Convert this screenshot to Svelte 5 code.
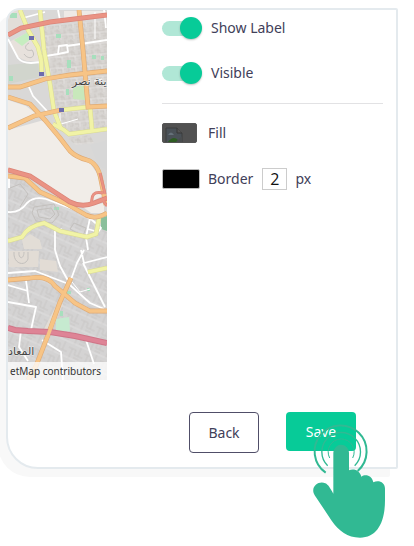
<script lang="ts">
	let showLabel = $state(true);
	let visible = $state(true);
	let borderWidth = $state('2');
</script>

<main class="page">
	<section class="panel">
		<div class="map">
			<svg class="tiles" viewBox="8 10 99 370" role="img" aria-label="Street map">
				<defs>
					<pattern id="blocks" width="13" height="11" patternUnits="userSpaceOnUse" patternTransform="rotate(-4)">
						<rect width="13" height="11" fill="#d8d5d2" />
						<path d="M0 2h5v3h5v-4M1 8h4v3M7 7h5v3h-3M3 0v6M11 3v4" fill="none" stroke="#c5c1bd" stroke-width="0.7" />
						<path d="M0 6h13M6 6v5" fill="none" stroke="#e7e5e3" stroke-width="0.8" />
					</pattern>
					<pattern id="lanes" width="17" height="15" patternUnits="userSpaceOnUse" patternTransform="rotate(24)">
						<rect width="17" height="15" fill="#d4d3d3" />
						<path d="M0 4h8v5h9M4 4v11M12 0v9M8 12h6" fill="none" stroke="#c6c4c3" stroke-width="0.8" />
						<path d="M0 14h17" stroke="#e2e1e1" stroke-width="0.8" />
					</pattern>
				</defs>

				<rect x="8" y="10" width="99" height="370" fill="#d9d8d7" />
				<path d="M42 27L107 20V130L65 132L50 85Z" fill="url(#blocks)" />
				<path d="M8 178L25 180L40 194L97 220L107 232V380H8Z" fill="url(#lanes)" />
				<path d="M61 115L87 110L90 128L68 132ZM67 138L90 135L94 143L76 145Z" fill="url(#blocks)" />

				<!-- land use -->
				<path d="M8 10H20L25 26L8 34Z" fill="#e2ded9" />
				<path d="M64 11H106V16L64 20Z" fill="#eeeae6" />
				<path d="M9 42L29 32L38 48L41 61H27L18 57Z" fill="#e7e1dc" />
				<path d="M14 40L28 32L31 39L22 46Z" fill="#c6edc0" />
				<path d="M8 65L38 62L40 77L8 84Z" fill="#d1d5cd" />
				<path d="M8 100L26 106L38 115L8 126ZM8 130L44 120L68 150L90 163L98 175L104 195L85 205L68 199L50 187L30 176L8 170Z" fill="#f1ede8" />
				<path d="M83 207L104 203V213H91Z" fill="#f1ede8" />
				<path d="M90 145L107 140V170L98 165Z" fill="#d7d7d7" />
				<path d="M101 218L107 216V231L101 229Z" fill="#8abf9b" />
				<path d="M73 87L84 85L85 100L73 99Z" fill="#c8e8bb" />
				<path d="M56 319L69 317L70 331L56 331Z" fill="#c6ead0" />
				<path d="M9 251L39 251L38 267L9 267ZM40 259L56 261L58 272L40 270Z" fill="#e2dcd5" />
				<path d="M43 331L58 302L63 304L50 335Z" fill="#e2ddd6" />
				<path d="M22 240L30 234L40 240L42 249H24Z" fill="#e2ddd6" />
				<g fill="#a7dfbd">
					<path d="M10 13h7v5h-7zM9 76h4v5h-4zM56 34h5v4h-5zM67 60h4v8h-4zM66 89h3v6h-3zM92 55h4v4h-4z" />
					<path d="M54 207h5v3h-5zM67 291h4v3h-4zM87 288h3v3h-3zM60 311h3v5h-3zM101 56h3v4h-3z" />
				</g>
				<g fill="none" stroke="#c3c0bd" stroke-width="1">
					<path d="M34 207L54 204L59 215L52 223L36 221L32 213ZM37 210L51 208L55 214L50 219L39 217Z" />
					<path d="M14 252C13 264 25 267 28 259V252M19 252C18 259 24 260 24 252" />
					<path d="M29 43C22 47 27 52 32 50C37 57 29 61 24 54" />
					<path d="M10 188L20 184L28 194L20 207M74 223L86 228L83 236L70 229Z" />
				</g>

				<!-- minor streets -->
				<g fill="none" stroke="#fff" stroke-width="1.8" stroke-linejoin="round">
					<path d="M8 39L18 58Q22 63 31 63L41 62M40 57L58 54L59 46L67 45L68 52L58 54M67 46L107 40" />
					<path d="M23 18L45 12M58 10L60 20M104 10L106 28M29 87L33 96L47 111M38 46L42 57" />
					<path d="M8 212Q20 213 27 203Q34 196 46 199L75 210L92 220L101 228L98 232L88 229M9 176V188M90 218L86 237L88 250M55 250V231L62 229" />
					<path d="M8 273L35 271L66 283M55 250L60 266L71 286L90 303L104 309M84 250L77 263L69 285M81 250L84 263L107 257M83 263L105 307" />
					<path d="M8 302L36 307L31 330M26 280L29 303M21 330L19 347L28 361M42 340L61 352L63 380M85 337L94 364M8 285L28 291" />
					<path d="M72 282L80 292L90 289M61 124L78 119M60 127V113M95 12V39M94 81L102 79" stroke-width="1" />
				</g>

				<!-- yellow roads -->
				<g fill="none" stroke="#d9da91" stroke-width="4.6">
					<path d="M20 10L28 30L38 47L41 59L42 75M40 10L44 50L50 84L54 111L61 129" />
					<path d="M61 110L88 107M90 107L92 130M53 124L64 130L69 134L107 129" />
					<path d="M8 241L22 237Q28 226 44 223L60 231L87 237L96 234L99 218M88 272L107 268" />
				</g>
				<g fill="none" stroke="#f1f3a6" stroke-width="3.6">
					<path d="M20 10L28 30L38 47L41 59L42 75M40 10L44 50L50 84L54 111L61 129" />
					<path d="M61 110L88 107M90 107L92 130M53 124L64 130L69 134L107 129" />
					<path d="M8 241L22 237Q28 226 44 223L60 231L87 237L96 234L99 218M88 272L107 268" />
				</g>

				<!-- orange roads -->
				<g fill="none" stroke="#dfaa74" stroke-width="4.8">
					<path d="M79 10L83 50L88 107L107 106M8 87H20L45 79L70 75L107 71" />
					<path d="M8 97L30 104L45 120L60 138L70 151Q76 157 87 160T101 180L106 205M8 128L34 116L61 110" />
					<path d="M8 176L25 178L40 192L65 203L86 215Q96 220 107 213M8 280L30 278Q48 275 55 286L75 303L90 311H107" />
					<path d="M71 278L60 302L48 335L36 366L28 380" />
				</g>
				<g fill="none" stroke="#f7c486" stroke-width="3.6">
					<path d="M79 10L83 50L88 107L107 106M8 87H20L45 79L70 75L107 71" />
					<path d="M8 97L30 104L45 120L60 138L70 151Q76 157 87 160T101 180L106 205M8 128L34 116L61 110" />
					<path d="M8 176L25 178L40 192L65 203L86 215Q96 220 107 213M8 280L30 278Q48 275 55 286L75 303L90 311H107" />
					<path d="M71 278L60 302L48 335L36 366L28 380" />
				</g>

				<!-- motorways -->
				<g fill="none" stroke="#db8478" stroke-width="5">
					<path d="M8 35L21 28L50 22L107 15M8 170L30 176L50 189L70 202Q82 208 94 203L107 198" />
					<path d="M100 173L105 194M92 204Q90 190 103 193M102 199L107 206" stroke-width="3" />
				</g>
				<g fill="none" stroke="#ea9384" stroke-width="3.4">
					<path d="M8 35L21 28L50 22L107 15M8 170L30 176L50 189L70 202Q82 208 94 203L107 198" />
					<path d="M100 173L105 194M92 204Q90 190 103 193M102 199L107 206" stroke-width="1.8" />
				</g>
				<path d="M8 328L15 330L28 331L50 332L75 336L107 343" fill="none" stroke="#cf7587" stroke-width="6" />
				<path d="M8 328L15 330L28 331L50 332L75 336L107 343" fill="none" stroke="#de8496" stroke-width="4" />
				<path d="M55 316L46 341" stroke="#f7c486" stroke-width="3.6" />

				<g fill="#6d6cae">
					<rect x="29" y="36" width="5" height="4" />
					<rect x="39" y="72" width="5" height="4" />
					<rect x="59" y="108" width="5" height="4" />
				</g>
				<text class="place" x="72" y="85" direction="ltr">ينة نصر</text>
				<text class="place" x="8" y="355" direction="ltr">المعاد</text>
			</svg>
			<div class="attribution">etMap contributors</div>
		</div>

		<form class="settings" onsubmit={(e) => e.preventDefault()}>
			<div class="toggles">
				<label class="toggle">
					<input type="checkbox" bind:checked={showLabel} />
					Show Label
				</label>
				<label class="toggle">
					<input type="checkbox" bind:checked={visible} />
					Visible
				</label>
			</div>

			<div class="row">
				<button type="button" class="swatch fill" aria-labelledby="fill-label">
					<svg width="34" height="19" viewBox="0 0 34 19" aria-hidden="true">
						<path d="M3 19V4H14L19 9V19Z" fill="#4a5157" stroke="#3c3e3f" />
						<path d="M14 4V9H19" fill="#555" stroke="#363636" />
						<path d="M5 11Q8 6 11 11Z" fill="#66717a" />
						<path d="M4 19Q10 11 15 16L13 19Z" fill="#2d5b22" />
						<path d="M12 19L19 12V19Z" fill="#494c4e" />
					</svg>
				</button>
				<span id="fill-label">Fill</span>
			</div>
			<div class="row">
				<button type="button" class="swatch border" aria-labelledby="border-label"></button>
				<label id="border-label" for="border-width">Border</label>
				<input id="border-width" class="width-input" type="text" inputmode="numeric" bind:value={borderWidth} />
				<span class="unit">px</span>
			</div>

			<div class="actions">
				<button type="button" class="btn back">Back</button>
				<div class="save-wrap">
					<button type="submit" class="btn save">Save</button>
					<svg class="tap" width="80" height="117" viewBox="120 70 240 351" aria-hidden="true">
						<g fill="none" stroke="#31b993">
							<path d="M167 222A78 78 0 1 1 263 217" stroke-width="6" />
							<path d="M173 201A58 58 0 1 1 254 201" stroke-width="4" />
							<path d="M179 178A39 39 0 1 1 248 178" stroke-width="3" />
						</g>
						<path
							d="M190 285V162A23.500 23.500 0 0 1 237 162V215C252 208 270 216 274 234C287 224 306 231 310 251C326 243 345 251 345 270V305C345 370 322 417 270 417C232 416 207 397 185 366L135 291C118 267 145 244 166 254C175 258 180 268 190 285Z"
							fill="#31b993"
						/>
					</svg>
				</div>
			</div>
		</form>
	</section>
</main>

<style>
	:global(body) {
		margin: 0;
		background: #fff;
	}

	.page {
		padding: 8px 16px 72px 6px;
		overflow: hidden;
		font-family: 'Noto Sans', 'Open Sans', sans-serif;
		font-size: 14px;
		line-height: 20px;
		color: #414059;
	}

	.panel {
		display: grid;
		grid-template-columns: 99px 1fr;
		border: 2px solid #e4eaee;
		border-radius: 14px 2px 2px 32px;
		background: #fff;
		box-shadow: -8px 8px 0 #f8f8f8;
	}

	.map {
		position: relative;
		align-self: start;
		overflow: hidden;
		border-top-left-radius: 12px;
	}

	.tiles {
		display: block;
		width: 100%;
	}

	.place {
		font-family: 'DejaVu Sans', sans-serif;
		font-size: 11px;
		fill: #444;
		stroke: #eee;
		stroke-width: 1px;
		paint-order: stroke;
	}

	.attribution {
		position: absolute;
		inset: auto 0 0 0;
		padding-right: 6px;
		background: rgba(255, 255, 255, 0.75);
		color: #333;
		font-size: 10px;
		line-height: 18px;
		text-align: right;
		white-space: nowrap;
	}

	.settings {
		display: flex;
		flex-direction: column;
		padding: 6px 13px 14px 55px;
	}

	.toggles {
		display: flex;
		flex-direction: column;
		gap: 21px;
		padding-bottom: 18px;
		margin-bottom: 17px;
		border-bottom: 1px solid #e2e2e4;
	}

	.toggle {
		display: flex;
		align-items: center;
		gap: 9px;
		height: 24px;
	}

	.toggle input {
		appearance: none;
		display: flex;
		align-items: center;
		width: 34px;
		height: 15px;
		margin: 0 6px 0 0;
		border-radius: 8px;
		background: #d5d5d5;
	}

	.toggle input::before {
		content: '';
		width: 22px;
		height: 22px;
		flex: none;
		border-radius: 50%;
		background: #fff;
		box-shadow: 0 1px 2px rgba(0, 0, 0, 0.25);
	}

	.toggle input:checked {
		background: #b0e7d6;
	}

	.toggle input:checked::before {
		margin-left: 18px;
		background: #07cb98;
	}

	.row {
		display: flex;
		align-items: center;
		height: 24px;
		margin-bottom: 22px;
	}

	.swatch {
		flex: none;
		height: 20px;
		padding: 0;
		border: 1px solid #555;
		border-radius: 2px;
		overflow: hidden;
	}

	.swatch svg {
		display: block;
	}

	.fill {
		width: 35px;
		margin-right: 11px;
		background: #515151;
	}

	.border {
		width: 38px;
		margin-right: 8px;
		border-color: #bbb;
		background: #000;
	}

	.width-input {
		box-sizing: border-box;
		width: 25px;
		height: 22px;
		margin: 0 8px 0 9px;
		padding: 0;
		border: 1px solid #ccc;
		background: #fff;
		color: #111;
		font: 500 16px 'Open Sans', 'Noto Sans', sans-serif;
		text-align: center;
	}

	.actions {
		display: flex;
		justify-content: flex-end;
		gap: 27px;
		margin-top: 199px;
		padding-right: 27px;
	}

	.btn {
		box-sizing: border-box;
		width: 70px;
		height: 41px;
		padding: 0;
		border-radius: 4px;
		font: inherit;
		cursor: pointer;
	}

	.back {
		border: 1px solid #504e68;
		background: #fff;
		color: inherit;
	}

	.save-wrap {
		position: relative;
	}

	.save {
		height: 39px;
		border: 0;
		background: #07cb98;
		color: #fff;
	}

	.tap {
		position: absolute;
		top: 10px;
		left: 24px;
		pointer-events: none;
	}
</style>
